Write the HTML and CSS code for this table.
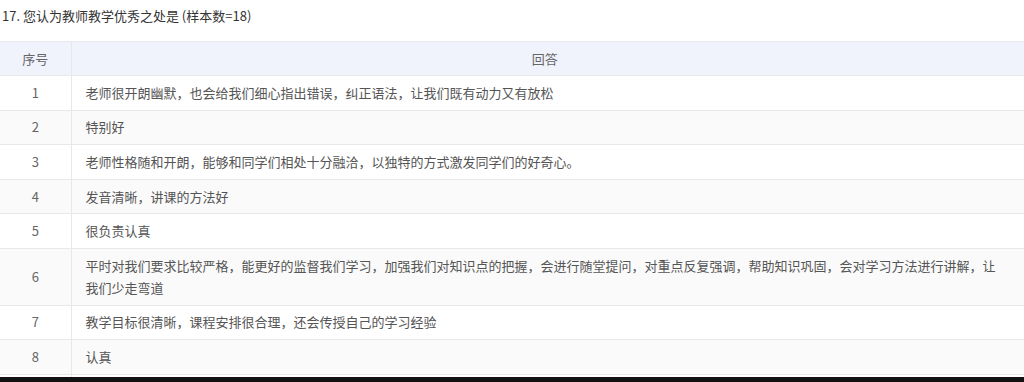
FILE: index.html
```html
<!DOCTYPE html>
<html lang="zh">
<head>
<meta charset="utf-8">
<link rel="stylesheet" href="styles.css">
</head>
<body>
<div class="question-title">17. 您认为教师教学优秀之处是 (样本数=18)</div>
<table class="answers">
  <colgroup><col class="col-no"><col></colgroup>
  <thead>
    <tr><th>序号</th><th>回答</th></tr>
  </thead>
  <tbody>
    <tr><td class="no">1</td><td>老师很开朗幽默，也会给我们细心指出错误，纠正语法，让我们既有动力又有放松</td></tr>
    <tr><td class="no">2</td><td>特别好</td></tr>
    <tr><td class="no">3</td><td>老师性格随和开朗，能够和同学们相处十分融洽，以独特的方式激发同学们的好奇心。</td></tr>
    <tr><td class="no">4</td><td>发音清晰，讲课的方法好</td></tr>
    <tr><td class="no">5</td><td>很负责认真</td></tr>
    <tr><td class="no">6</td><td>平时对我们要求比较严格，能更好的监督我们学习，加强我们对知识点的把握，会进行随堂提问，对重点反复强调，帮助知识巩固，会对学习方法进行讲解，让我们少走弯道</td></tr>
    <tr><td class="no">7</td><td>教学目标很清晰，课程安排很合理，还会传授自己的学习经验</td></tr>
    <tr><td class="no">8</td><td>认真</td></tr>
    <tr class="row-partial"><td class="no"></td><td></td></tr>
  </tbody>
</table>
<div class="bottom-bar"></div>
</body>
</html>
```

FILE: styles.css
```css
html, body {
  margin: 0;
  padding: 0;
  overflow: hidden;
  background: #ffffff;
}
body {
  font-family: "Microsoft YaHei", "Noto Sans CJK SC", "Noto Sans", sans-serif;
  font-size: 13px;
  color: #555555;
}
.question-title {
  padding: 5px 2px 0 2px;
  height: 41px;
  box-sizing: border-box;
  line-height: 22px;
  color: #333333;
}
.answers {
  width: 100%;
  border-collapse: collapse;
  table-layout: fixed;
}
.col-no {
  width: 71px;
}
.answers th,
.answers td {
  border: 1px solid #e8e8ec;
  padding: 5.8px 20px 5.8px 14px;
  line-height: 22px;
  text-align: left;
  vertical-align: middle;
  font-weight: normal;
}
.answers th:first-child,
.answers td:first-child {
  border-left: none;
  padding-right: 14px;
}
.answers th:last-child,
.answers td:last-child {
  border-right: none;
}
.answers thead th {
  background: #f0f3fc;
  color: #666666;
  text-align: center;
  padding-top: 5.5px;
  padding-bottom: 5.5px;
}
.answers tbody tr:nth-child(even) td {
  background: #fafafa;
}
.answers td.no {
  text-align: center;
  color: #666666;
}
.answers .row-partial td {
  height: 22px;
}
.bottom-bar {
  position: fixed;
  left: 0;
  right: 0;
  bottom: 0;
  height: 5px;
  background: #111111;
}
```
